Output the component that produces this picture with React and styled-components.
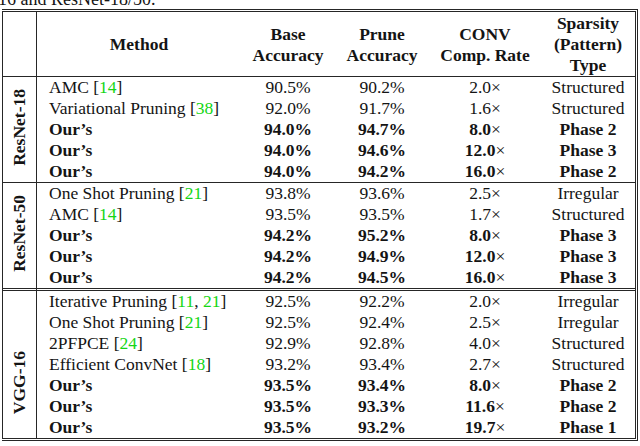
import React from 'react';
import styled, { createGlobalStyle } from 'styled-components';

const GlobalStyle = createGlobalStyle`
  html, body {
    margin: 0;
    padding: 0;
    background: #fff;
    overflow: hidden;
  }
  body {
    font-family: "Liberation Serif", "Times New Roman", serif;
    color: #141414;
  }
`;

const ink = '#262626';

const Page = styled.div`
  width: 640px;
  height: 446px;
  overflow: hidden;
`;

const Caption = styled.div`
  height: 20px;
  margin-top: -11px;
  margin-left: -2px;
  font-size: 18px;
  line-height: 20px;
  white-space: nowrap;
`;

const Table = styled.table`
  width: 636px;
  margin-left: 2px;
  border-collapse: separate;
  border-spacing: 0;
  table-layout: fixed;
  border-top: 3px double ${ink};
  border-bottom: 3px double ${ink};
  border-left: 1px solid ${ink};
  border-right: 3px double ${ink};
  font-size: 17.5px;
`;

const Col = styled.col`
  width: ${(p) => p.$w}px;
`;

const HeadCell = styled.th`
  padding: 1px 0 0;
  font-weight: bold;
  line-height: 21px;
  text-align: center;
  vertical-align: middle;
  white-space: nowrap;
  border-bottom: 1px solid ${ink};
  border-right: ${(p) => (p.$divider ? `1px solid ${ink}` : 'none')};
`;

const Row = styled.tr`
  font-weight: ${(p) => (p.$bold ? 'bold' : 'normal')};

  & > td {
    border-top: ${(p) =>
      p.$sep === 'double' ? `3px double ${ink}` : p.$sep === 'single' ? `1px solid ${ink}` : 'none'};
  }
`;

const Cell = styled.td`
  height: 21px;
  padding: 0;
  line-height: 21px;
  text-align: ${(p) => (p.$left ? 'left' : 'center')};
  padding-left: ${(p) => (p.$left ? '12px' : '0')};
  white-space: nowrap;
  vertical-align: middle;
`;

const GroupCell = styled.td`
  padding: 0;
  text-align: center;
  vertical-align: middle;
  border-right: 1px solid ${ink};
`;

const GroupLabel = styled.span`
  display: inline-block;
  writing-mode: vertical-rl;
  transform: rotate(180deg);
  font-weight: bold;
  line-height: 1;
  white-space: nowrap;
`;

const Ref = styled.span`
  color: #14d614;
`;

const Times = styled.span`
  font-weight: normal;
`;

const ours = (base, prune, rate, type) => ({ method: 'Our’s', bold: true, base, prune, rate, type });

const groups = [
  {
    name: 'ResNet-18',
    sep: null,
    skip: 0,
    rows: [
      { method: 'AMC', refs: ['14'], base: '90.5%', prune: '90.2%', rate: '2.0', type: 'Structured' },
      { method: 'Variational Pruning', refs: ['38'], base: '92.0%', prune: '91.7%', rate: '1.6', type: 'Structured' },
      ours('94.0%', '94.7%', '8.0', 'Phase 2'),
      ours('94.0%', '94.6%', '12.0', 'Phase 3'),
      ours('94.0%', '94.2%', '16.0', 'Phase 2'),
    ],
  },
  {
    name: 'ResNet-50',
    sep: 'single',
    skip: 0,
    rows: [
      { method: 'One Shot Pruning', refs: ['21'], base: '93.8%', prune: '93.6%', rate: '2.5', type: 'Irregular' },
      { method: 'AMC', refs: ['14'], base: '93.5%', prune: '93.5%', rate: '1.7', type: 'Structured' },
      ours('94.2%', '95.2%', '8.0', 'Phase 3'),
      ours('94.2%', '94.9%', '12.0', 'Phase 3'),
      ours('94.2%', '94.5%', '16.0', 'Phase 3'),
    ],
  },
  {
    name: 'VGG-16',
    sep: 'double',
    skip: 2,
    rows: [
      { method: 'Iterative Pruning', refs: ['11', '21'], base: '92.5%', prune: '92.2%', rate: '2.0', type: 'Irregular' },
      { method: 'One Shot Pruning', refs: ['21'], base: '92.5%', prune: '92.4%', rate: '2.5', type: 'Irregular' },
      { method: '2PFPCE', refs: ['24'], base: '92.9%', prune: '92.8%', rate: '4.0', type: 'Structured' },
      { method: 'Efficient ConvNet', refs: ['18'], base: '93.2%', prune: '93.4%', rate: '2.7', type: 'Structured' },
      ours('93.5%', '93.4%', '8.0', 'Phase 2'),
      ours('93.5%', '93.3%', '11.6', 'Phase 2'),
      ours('93.5%', '93.2%', '19.7', 'Phase 1'),
    ],
  },
];

const Method = ({ row }) => (
  <>
    {row.method}
    {row.refs && (
      <>
        {' ['}
        {row.refs.map((r, i) => (
          <React.Fragment key={r}>
            {i > 0 && ', '}
            <Ref>{r}</Ref>
          </React.Fragment>
        ))}
        {']'}
      </>
    )}
  </>
);

// first column: the network name, spread over its rows (VGG-16 starts lower)
const groupCells = (group, i) => {
  const span = group.rows.length - group.skip;
  if (group.skip > 0) {
    if (i === 0) return <GroupCell rowSpan={group.skip} />;
    if (i !== group.skip) return null;
  } else if (i !== 0) {
    return null;
  }
  return (
    <GroupCell rowSpan={span}>
      <GroupLabel>{group.name}</GroupLabel>
    </GroupCell>
  );
};

const App = () => (
  <Page>
    <GlobalStyle />
    <Caption>16 and ResNet-18/50.</Caption>
    <Table>
      <colgroup>
        <Col $w={34} />
        <Col $w={204} />
        <Col $w={94} />
        <Col $w={94} />
        <Col $w={112} />
        <Col $w={94} />
      </colgroup>
      <thead>
        <tr>
          <HeadCell $divider />
          <HeadCell>Method</HeadCell>
          <HeadCell>Base<br />Accuracy</HeadCell>
          <HeadCell>Prune<br />Accuracy</HeadCell>
          <HeadCell>CONV<br />Comp. Rate</HeadCell>
          <HeadCell>Sparsity<br />(Pattern)<br />Type</HeadCell>
        </tr>
      </thead>
      <tbody>
        {groups.map((group) =>
          group.rows.map((row, i) => (
            <Row key={`${group.name}-${i}`} $bold={row.bold} $sep={i === 0 ? group.sep : null}>
              {groupCells(group, i)}
              <Cell $left><Method row={row} /></Cell>
              <Cell>{row.base}</Cell>
              <Cell>{row.prune}</Cell>
              <Cell>{row.rate}<Times>×</Times></Cell>
              <Cell>{row.type}</Cell>
            </Row>
          ))
        )}
      </tbody>
    </Table>
  </Page>
);

export default App;
